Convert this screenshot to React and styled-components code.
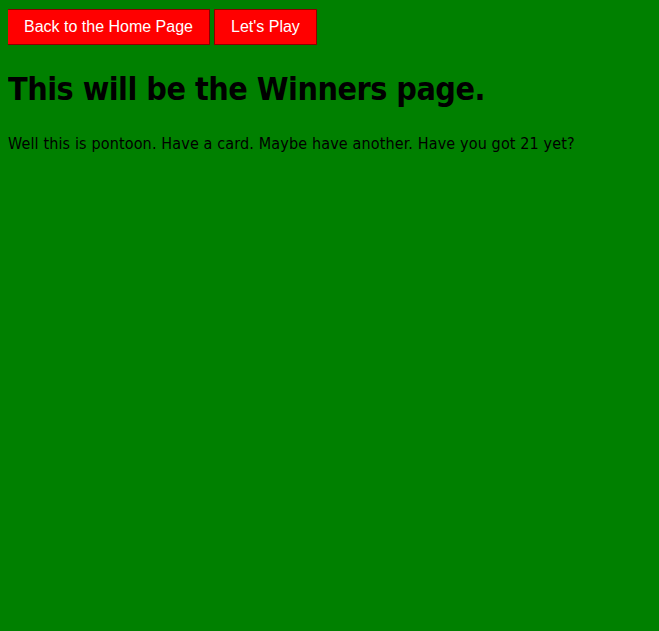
import React from "react";
import styled, { createGlobalStyle } from "styled-components";

const GlobalStyle = createGlobalStyle`
  html, body {
    background: #008000;
  }
  body {
    margin: 8px;
    font-family: "Comic Sans MS", "DejaVu Sans Condensed", "DejaVu Sans", sans-serif;
    color: #000;
  }
`;

const Nav = styled.nav`
  display: flex;
  gap: 4px;
  margin-left: -1px;
  margin-top: 1px;
`;

const NavButton = styled.button`
  background: #ff0000;
  color: #fff;
  border: 1px solid #8b0000;
  font-family: "Liberation Sans", Arial, sans-serif;
  font-size: 16px;
  line-height: 18px;
  padding: 8px 16px;
  cursor: pointer;
`;

const Title = styled.h1`
  font-size: 32px;
  line-height: 45px;
  font-weight: bold;
  margin: 22px 0 21px;
  letter-spacing: -0.5px;
`;

const Text = styled.p`
  font-size: 16px;
  line-height: 22px;
  margin: 17px 0 16px;
  letter-spacing: 0.14px;
`;

export default function App() {
  return (
    <>
      <GlobalStyle />
      <Nav>
        <NavButton>Back to the Home Page</NavButton>
        <NavButton>Let's Play</NavButton>
      </Nav>
      <Title>This will be the Winners page.</Title>
      <Text>
        Well this is pontoon. Have a card. Maybe have another. Have you got 21
        yet?
      </Text>
    </>
  );
}
